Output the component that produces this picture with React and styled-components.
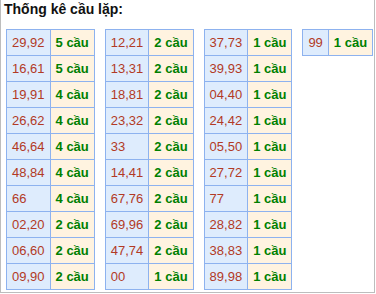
import React from "react";
import styled, { createGlobalStyle } from "styled-components";

const GlobalStyle = createGlobalStyle`
  body {
    margin: 0;
    font-family: "Liberation Sans", Arial, sans-serif;
    background: #fff;
  }
`;

const Box = styled.div`
  box-sizing: border-box;
  width: 375px;
  height: 293px;
  border: 1px solid #bdbdbd;
  border-top: none;
  padding: 1px 0 0 5px;
`;

const Title = styled.div`
  margin-left: -2px;
  font-size: 14px;
  font-weight: bold;
  line-height: 16px;
  color: #111;
`;

const Tables = styled.div`
  display: flex;
  align-items: flex-start;
  gap: 10px;
  margin-top: 12px;
`;

const Table = styled.table`
  border-collapse: collapse;
`;

const Cell = styled.td`
  border: 1px solid #8db2ef;
  padding: 0 5px;
  height: 25px;
  font-family: "Liberation Sans", Arial, sans-serif;
  font-size: 13px;
  line-height: 15px;
  white-space: nowrap;
  text-align: ${(p) => (p.count ? "center" : "left")};
  background: ${(p) => (p.count ? "#fff3e0" : "#deecfd")};
  color: ${(p) => (p.count ? "#008000" : "#b23a25")};
  font-weight: ${(p) => (p.count ? "bold" : "normal")};
`;

const columns = [
  [
    ["29,92", 5], ["16,61", 5], ["19,91", 4], ["26,62", 4], ["46,64", 4],
    ["48,84", 4], ["66", 4], ["02,20", 2], ["06,60", 2], ["09,90", 2],
  ],
  [
    ["12,21", 2], ["13,31", 2], ["18,81", 2], ["23,32", 2], ["33", 2],
    ["14,41", 2], ["67,76", 2], ["69,96", 2], ["47,74", 2], ["00", 1],
  ],
  [
    ["37,73", 1], ["39,93", 1], ["04,40", 1], ["24,42", 1], ["05,50", 1],
    ["27,72", 1], ["77", 1], ["28,82", 1], ["38,83", 1], ["89,98", 1],
  ],
  [["99", 1]],
];

const App = () => (
  <>
    <GlobalStyle />
    <Box>
      <Title>Thống kê cầu lặp:</Title>
      <Tables>
        {columns.map((rows, i) => (
          <Table key={i}>
            <tbody>
              {rows.map(([pair, n]) => (
                <tr key={pair}>
                  <Cell>{pair}</Cell>
                  <Cell count>{n} cầu</Cell>
                </tr>
              ))}
            </tbody>
          </Table>
        ))}
      </Tables>
    </Box>
  </>
);

export default App;
